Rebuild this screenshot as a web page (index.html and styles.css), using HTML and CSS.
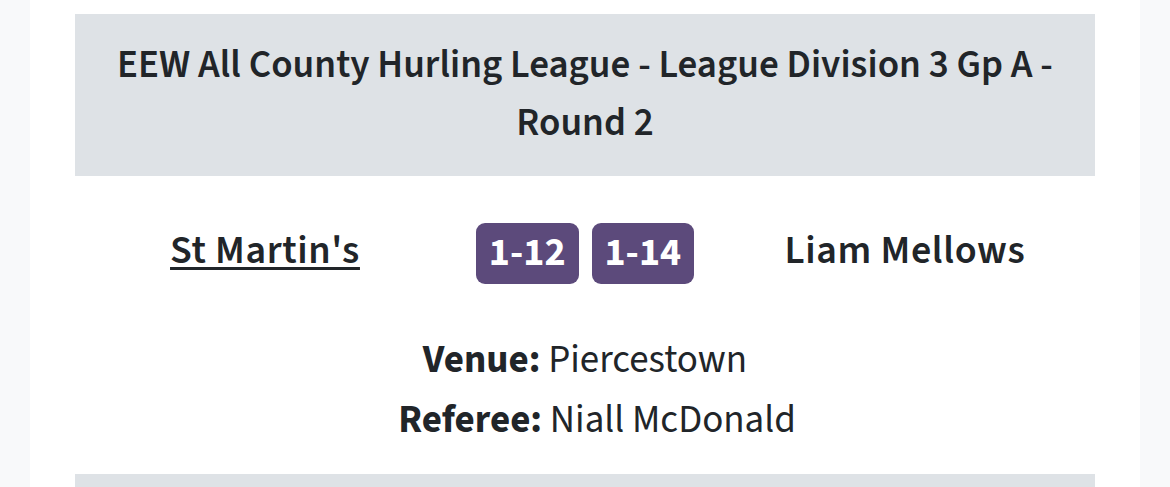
FILE: index.html
```html
<!DOCTYPE html>
<html lang="en">
<head>
<meta charset="utf-8">
<title>Fixture</title>
<link rel="stylesheet" href="styles.css">
</head>
<body>
<main class="card">
  <section class="fixture">
    <h2 class="fixture-title">EEW All County Hurling League - League Division 3 Gp A - Round 2</h2>
    <div class="match">
      <div class="team team-home"><a href="#" class="team-link">St Martin's</a></div>
      <div class="scores"><span class="score">1-12</span><span class="score">1-14</span></div>
      <div class="team team-away">Liam Mellows</div>
    </div>
    <div class="details">
      <div class="detail"><strong>Venue:</strong> Piercestown</div>
      <div class="detail detail-referee"><strong>Referee:</strong> Niall McDonald</div>
    </div>
  </section>
  <section class="fixture">
    <div class="fixture-title fixture-next"></div>
  </section>
</main>
</body>
</html>
```
FILE: styles.css
```css
html, body { margin: 0; padding: 0; }
body {
  background: #f8f9fa;
  color: #212529;
  font-family: "Source Sans 3", Lato, "Noto Sans", sans-serif;
}
.card {
  margin: 0 30px;
  background: #ffffff;
  padding: 14px 45px 0;
  min-height: 487px;
  box-sizing: border-box;
}
.fixture-title {
  margin: 0;
  background: #dee2e6;
  text-align: center;
  font-size: 39px;
  font-weight: 600;
  line-height: 58px;
  padding: 22px 20px 24px;
}
.fixture-next { height: 116px; }
.match {
  display: grid;
  grid-template-columns: 1fr 1fr 1fr;
  align-items: center;
  padding: 46px 30px;
  font-size: 40px;
  font-weight: 600;
}
.team {
  text-align: center;
  letter-spacing: 0.6px;
  padding-bottom: 5px;
}
.team-link {
  color: #212529;
  text-decoration: underline;
  text-decoration-thickness: 2.5px;
  text-underline-offset: 4px;
}
.scores {
  display: flex;
  justify-content: center;
  gap: 13px;
}
.score {
  background: #5c4a7b;
  color: #ffffff;
  font-weight: 700;
  font-size: 40px;
  line-height: 57px;
  padding: 1px 13px 3px;
  border-radius: 9px;
}
.details {
  text-align: center;
  font-size: 39px;
  line-height: 60px;
  padding-bottom: 24px;
}
.detail-referee { padding-left: 24px; }
.details strong { font-weight: 700; }
```
